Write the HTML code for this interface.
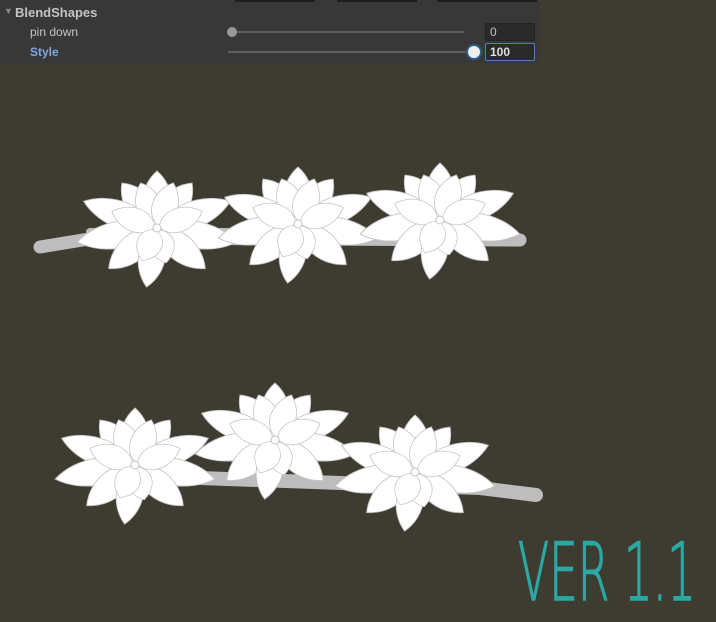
<!DOCTYPE html>
<html><head><meta charset="utf-8"><style>
html,body{margin:0;padding:0;width:716px;height:622px;overflow:hidden;background:#3e3b31;font-family:"Liberation Sans",sans-serif}
.panel{position:absolute;left:0;top:0;width:540px;height:63px;background:#383838}
.t{position:absolute;font-size:12px;color:#c4c4c4}
</style></head><body>
<div class="panel">
 <div style="position:absolute;left:235px;top:0;width:80px;height:2px;background:#1e1e1e"></div>
 <div style="position:absolute;left:337px;top:0;width:80px;height:2px;background:#1e1e1e"></div>
 <div style="position:absolute;left:437px;top:0;width:100px;height:2px;background:#1e1e1e"></div>
 <div class="t" style="left:4px;top:6px;font-size:9px;color:#8a8a8a">▼</div>
 <div class="t" style="left:15px;top:5px;font-weight:bold;font-size:13px">BlendShapes</div>
 <div class="t" style="left:30px;top:25px">pin down</div>
 <div class="t" style="left:30px;top:45px;color:#7ea6e6;font-weight:bold">Style</div>
 <div style="position:absolute;left:230px;top:31px;width:234px;height:2px;background:#5e5e5e"></div>
 <div style="position:absolute;left:227px;top:27px;width:10px;height:10px;border-radius:50%;background:#999"></div>
 <div style="position:absolute;left:485px;top:23px;width:48px;height:16px;background:#2a2a2a;border:1px solid #232323;border-radius:2px;color:#c4c4c4;font-size:12px;line-height:16px;text-indent:4px">0</div>
 <div style="position:absolute;left:228px;top:51px;width:240px;height:2px;background:#5e5e5e"></div>
 <div style="position:absolute;left:466px;top:44px;width:12px;height:12px;border-radius:50%;background:#eee;border:2px solid #2e5a8c"></div>
 <div style="position:absolute;left:485px;top:43px;width:48px;height:16px;background:#2a2a2a;border:1px solid #4b7fc4;border-radius:2px;color:#e0e0e0;font-size:12px;font-weight:bold;line-height:16px;text-indent:4px">100</div>
</div>
<svg width="716" height="622" style="position:absolute;left:0;top:0">
<defs>
 <path id="p" d="M3,0 C12,-20 42,-22 60,0 C42,22 12,20 3,0Z" fill="#fff" stroke="#c4c4c4" stroke-width="1"/>
 <g id="f">
  <use href="#p" transform="rotate(-128) scale(0.95,0.85)"/>
  <use href="#p" transform="rotate(-52) scale(0.95,0.85)"/>
  <use href="#p" transform="rotate(-90) scale(0.95,0.9)"/>
  <use href="#p" transform="rotate(-160) scale(1.3,0.85)"/>
  <use href="#p" transform="rotate(-20) scale(1.3,0.85)"/>
  <use href="#p" transform="rotate(-110) scale(0.8,0.8)"/>
  <use href="#p" transform="rotate(-70) scale(0.8,0.8)"/>
  <use href="#p" transform="rotate(170) scale(1.35,0.85)"/>
  <use href="#p" transform="rotate(10) scale(1.35,0.85)"/>
  <use href="#p" transform="rotate(140) scale(1.05,0.85)"/>
  <use href="#p" transform="rotate(40) scale(1.05,0.85)"/>
  <use href="#p" transform="rotate(100) scale(1.0,0.85)"/>
  <use href="#p" transform="rotate(-160) scale(0.8,0.75)"/>
  <use href="#p" transform="rotate(-20) scale(0.8,0.75)"/>
  <use href="#p" transform="rotate(75) scale(0.6,0.8)"/>
  <use href="#p" transform="rotate(115) scale(0.6,0.8)"/>
  <circle r="4" fill="#fff" stroke="#c4c4c4"/>
 </g>
</defs>
<path d="M40,247 L95,238 L520,240" fill="none" stroke="#bdbdbd" stroke-width="13" stroke-linecap="round" stroke-linejoin="round"/>
<path d="M90,232 L440,232" fill="none" stroke="#bdbdbd" stroke-width="8" stroke-linecap="round"/>
<path d="M200,478 L480,488 L536,495" fill="none" stroke="#bdbdbd" stroke-width="14" stroke-linecap="round" stroke-linejoin="round"/>
<path d="M215,452 L280,458" fill="none" stroke="#6a6560" stroke-width="12" stroke-linecap="round"/>
<use href="#f" x="157" y="228"/>
<use href="#f" x="298" y="224"/>
<use href="#f" x="440" y="220"/>
<use href="#f" x="135" y="465"/>
<use href="#f" x="275" y="440"/>
<use href="#f" x="415" y="472"/>
<text x="518" y="600" font-family="DejaVu Sans" font-weight="200" font-size="80" textLength="178" lengthAdjust="spacingAndGlyphs" fill="#2aa9a4" stroke="#2aa9a4" stroke-width="1.5">VER 1.1</text>
</svg>
</body></html>
